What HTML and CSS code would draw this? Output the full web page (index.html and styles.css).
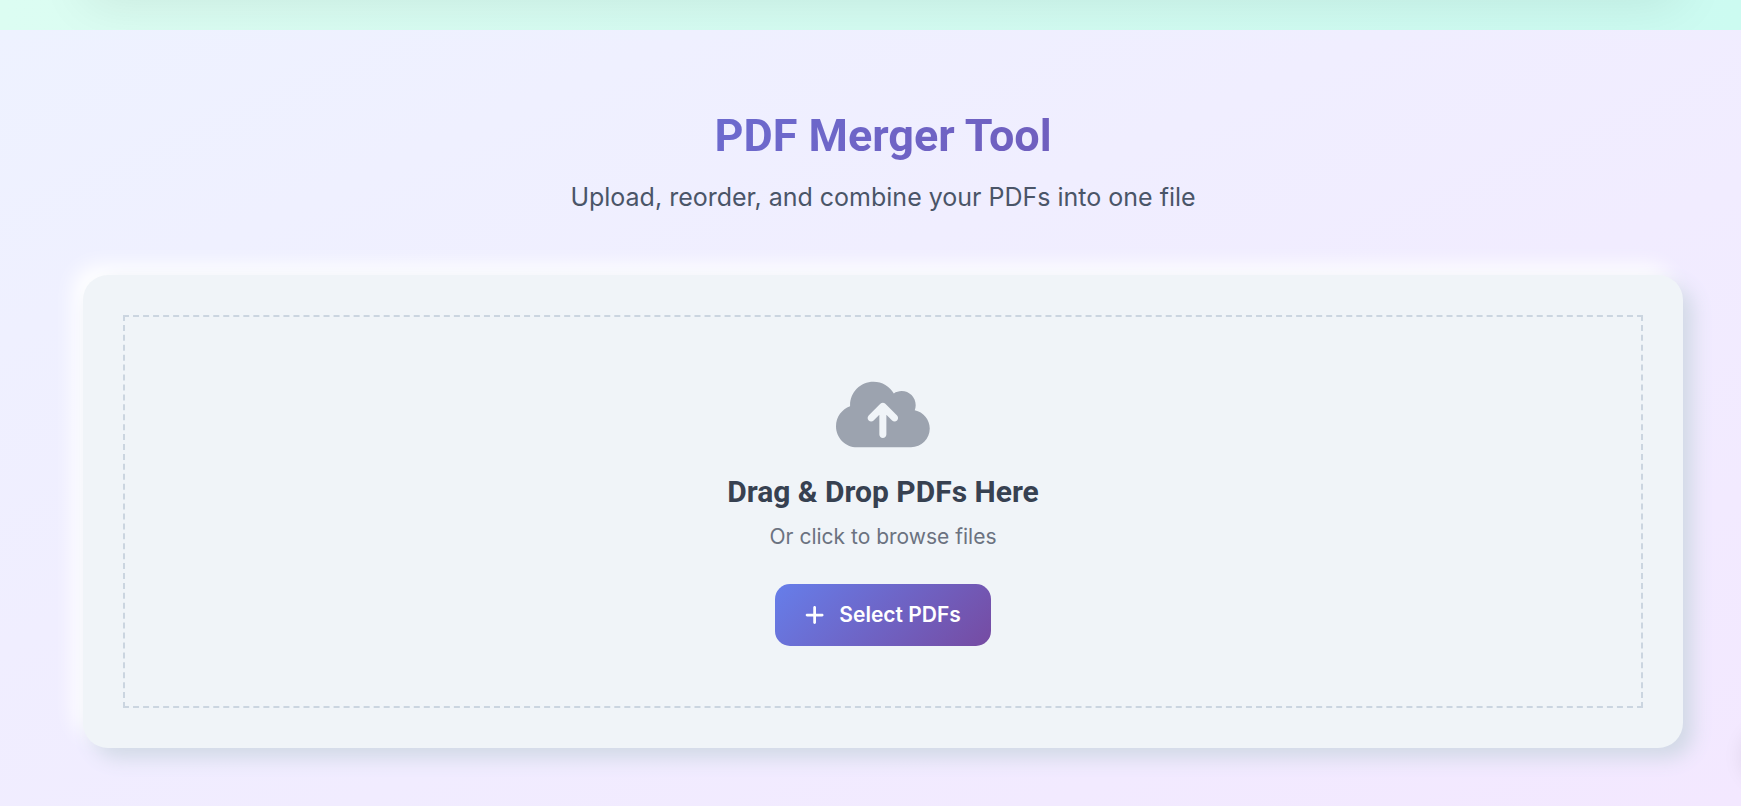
FILE: index.html
```
<!DOCTYPE html>
<html lang="en">
<head>
    <meta charset="UTF-8">
    <meta name="viewport" content="width=device-width, initial-scale=1.0">
    <title>PDF Merger Tool</title>
    <link rel="stylesheet" href="styles.css">
</head>
<body>
    <!-- End of the previous section -->
    <div class="prev-section">
        <div class="prev-card"></div>
    </div>

    <main class="merger">
        <div class="container">
            <header class="merger-header">
                <h1>PDF Merger Tool</h1>
                <p>Upload, reorder, and combine your PDFs into one file</p>
            </header>

            <div class="card">
                <div class="drop-zone">
                    <svg class="cloud-icon" viewBox="0 0 640 512" aria-hidden="true">
                        <path fill="currentColor" d="M144 480C64.5 480 0 415.5 0 336c0-62.8 40.2-116.2 96.2-135.9c-.1-2.7-.2-5.4-.2-8.1c0-88.4 71.6-160 160-160c59.3 0 111 32.2 138.7 80.2C409.9 102 428.3 96 448 96c53 0 96 43 96 96c0 12.2-2.3 23.8-6.4 34.6C596 238.4 640 290.1 640 352c0 70.7-57.3 128-128 128H144zm79-217c-9.4 9.4-9.4 24.6 0 33.9s24.6 9.4 33.9 0l39-39V392c0 13.3 10.7 24 24 24s24-10.7 24-24V257.9l39 39c9.4 9.4 24.6 9.4 33.9 0s9.4-24.6 0-33.9l-80-80c-9.4-9.4-24.6-9.4-33.9 0l-80 80z"/>
                    </svg>
                    <h2>Drag &amp; Drop PDFs Here</h2>
                    <p>Or click to browse files</p>
                    <button type="button" class="btn">
                        <svg class="plus-icon" viewBox="0 0 448 512" aria-hidden="true">
                            <path fill="currentColor" d="M256 80c0-17.7-14.3-32-32-32s-32 14.3-32 32V224H48c-17.7 0-32 14.3-32 32s14.3 32 32 32H192V432c0 17.7 14.3 32 32 32s32-14.3 32-32V288H400c17.7 0 32-14.3 32-32s-14.3-32-32-32H256V80z"/>
                        </svg>
                        Select PDFs
                    </button>
                </div>
            </div>
        </div>
        <div class="side-shadow"></div>
    </main>
</body>
</html>
```
FILE: styles.css
```
* {
    box-sizing: border-box;
    margin: 0;
    padding: 0;
}
body {
    font-family: Inter, "Liberation Sans", sans-serif;
    color: #4a5568;
    overflow-x: hidden;
}
.prev-section {
    height: 30px;
    padding: 0 58px 0 83px;
    background: linear-gradient(90deg, #dcfdf2, #ccfbf1);
    overflow: hidden;
}
.prev-card {
    height: 60px;
    margin-top: -80px;
    border-radius: 20px;
    box-shadow: 0 25px 50px rgba(0, 0, 0, 0.08);
}
.merger {
    position: relative;
    min-height: calc(100vh - 30px);
    padding: 80px 58px 58px 83px;
    background: linear-gradient(to bottom right, #eef2ff, #f3e8ff);
    overflow: hidden;
}
.container {
    max-width: 1600px;
    margin: 0 auto;
}
.merger-header {
    margin-bottom: 60px;
    text-align: center;
}
.merger-header h1 {
    margin-bottom: 18px;
    font-family: Roboto, "Liberation Sans", sans-serif;
    font-size: 45px;
    font-weight: 700;
    line-height: 52px;
    background: linear-gradient(135deg, #667eea, #764ba2);
    -webkit-background-clip: text;
    background-clip: text;
    color: transparent;
}
.merger-header p {
    font-size: 25px;
    line-height: 35px;
}
.card {
    padding: 40px;
    border-radius: 25px;
    background: #f0f4f8;
    box-shadow: 10px 10px 20px #d1d9e6, -10px -10px 20px #ffffff;
}
.drop-zone {
    display: flex;
    flex-direction: column;
    align-items: center;
    padding: 60px;
    border: 2px dashed #cbd5e0;
}
.cloud-icon {
    height: 75px;
    margin-bottom: 20px;
    color: #9ca3af;
}
.drop-zone h2 {
    margin-bottom: 10px;
    font-family: Roboto, "Liberation Sans", sans-serif;
    font-size: 30px;
    font-weight: 700;
    line-height: 40px;
    color: #374151;
}
.drop-zone p {
    margin-bottom: 32px;
    font-size: 21px;
    line-height: 30px;
    color: #6b7280;
}
.btn {
    display: flex;
    align-items: center;
    gap: 15px;
    padding: 15px 30px;
    border: none;
    border-radius: 15px;
    background: linear-gradient(135deg, #667eea, #764ba2);
    color: white;
    font-family: inherit;
    font-size: 21px;
    font-weight: 600;
    line-height: 32px;
    cursor: pointer;
}
.plus-icon {
    height: 22px;
}
/* glow of the floating control past the right edge */
.side-shadow {
    position: absolute;
    right: -60px;
    bottom: 20px;
    width: 60px;
    height: 60px;
    border-radius: 50%;
    box-shadow: 0 0 20px rgba(0, 0, 0, 0.08);
}
```
